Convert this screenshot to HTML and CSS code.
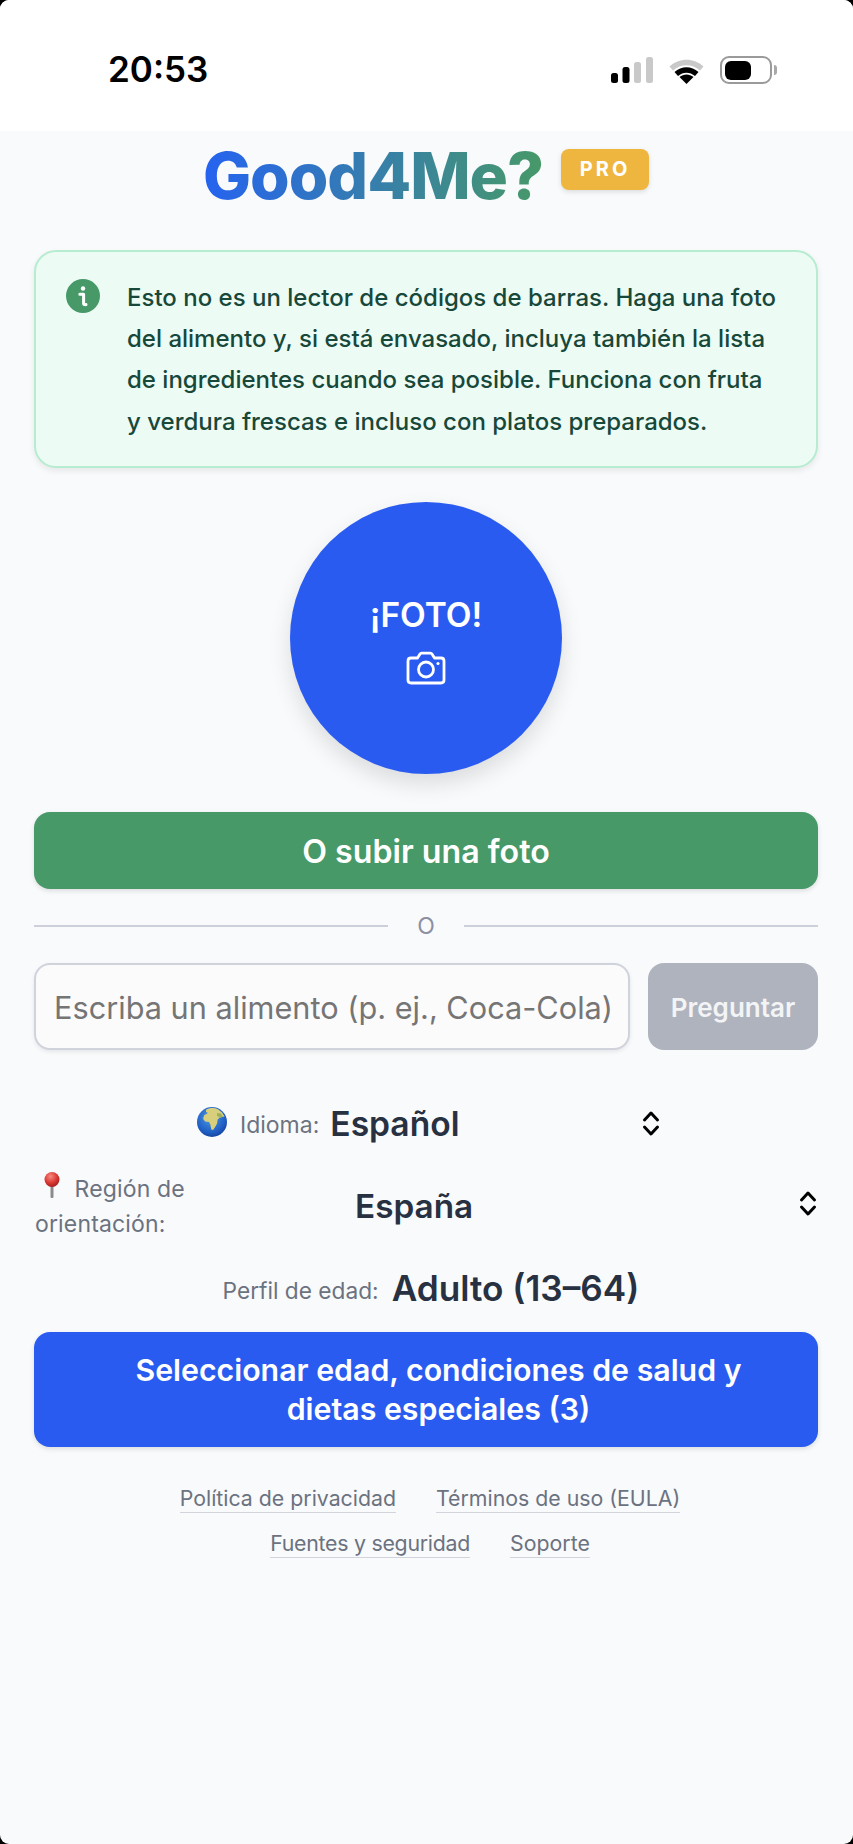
FILE: index.html
```html
<!DOCTYPE html>
<html lang="es">
<head>
<meta charset="utf-8">
<title>Good4Me?</title>
<link rel="stylesheet" href="styles.css">
</head>
<body>
<div class="app">
  <header class="status">
    <span class="time">20:53</span>
    <div class="status-icons">
      <svg class="signal" width="42" height="26" viewBox="0 0 42 26" aria-hidden="true">
        <rect x="0" y="16" width="7" height="10" rx="2.5" fill="#000"/>
        <rect x="11.5" y="10" width="7" height="16" rx="2.5" fill="#000"/>
        <rect x="23" y="5" width="7" height="21" rx="2.5" fill="#c9c9c9"/>
        <rect x="35" y="0" width="7" height="26" rx="2.5" fill="#c9c9c9"/>
      </svg>
      <svg class="wifi" width="35" height="27" viewBox="0 0 35 27" aria-hidden="true">
        <path d="M0.5 9.5C10 0.5 25 0.5 34.5 9.5L31 13.5C23 6.5 12 6.5 4 13.5Z" fill="#c9c9c9"/>
        <path d="M5.5 15C12.5 8.5 22.5 8.5 29.5 15L26 19C21 14.5 14 14.5 9 19Z" fill="#000"/>
        <path d="M10.5 20C14.5 16.5 20.5 16.5 24.5 20L17.5 27Z" fill="#000"/>
      </svg>
      <div class="battery"><div class="battery-fill"></div></div>
      <div class="battery-tip"></div>
    </div>
  </header>

  <main class="content">
    <div class="brand">
      <h1 class="logo">Good4Me?</h1>
      <span class="pro">PRO</span>
    </div>

    <section class="notice">
      <svg class="notice-icon" width="34" height="34" viewBox="0 0 34 34" aria-hidden="true">
        <circle cx="17" cy="17" r="17" fill="#479968"/>
        <circle cx="17" cy="9.5" r="2.2" fill="#fff"/>
        <path d="M13.8 15.2h3.8v9.2c0 1 .6 1.4 2.4 1.2" fill="none" stroke="#fff" stroke-width="3" stroke-linecap="round" stroke-linejoin="round"/>
      </svg>
      <p class="notice-text">Esto no es un lector de códigos de barras. Haga una foto del alimento y, si está envasado, incluya también la lista de ingredientes cuando sea posible. Funciona con fruta y&nbsp;verdura frescas e incluso con platos preparados.</p>
    </section>

    <button class="shoot" type="button">
      <span class="shoot-label">¡FOTO!</span>
      <svg width="40" height="34" viewBox="0 0 40 34" aria-hidden="true">
        <path d="M5 7h6.5l2.2-3.6c.5-.8 1.1-1.2 2-1.2h8.600c.9 0 1.500.4 2 1.200L28.500 7H35c1.700 0 3 1.300 3 3v19c0 1.700-1.300 3-3 3H5c-1.700 0-3-1.300-3-3V10c0-1.700 1.300-3 3-3Z" fill="none" stroke="#fff" stroke-width="2.800" stroke-linejoin="round"/>
        <circle cx="20" cy="18.500" r="7.500" fill="none" stroke="#fff" stroke-width="2.800"/>
        <circle cx="32" cy="12.500" r="1.600" fill="#fff"/>
      </svg>
    </button>

    <button class="upload" type="button">O subir una foto</button>

    <div class="divider"><span class="divider-label">O</span></div>

    <form class="ask">
      <input class="ask-input" type="text" placeholder="Escriba un alimento (p. ej., Coca-Cola)">
      <button class="ask-button" type="button">Preguntar</button>
    </form>

    <div class="field field-lang">
      <svg class="globe" width="30" height="30" viewBox="0 0 30 30" aria-hidden="true">
        <defs>
          <radialGradient id="sea" cx="45%" cy="35%" r="70%">
            <stop offset="0" stop-color="#4d9be8"/>
            <stop offset="0.7" stop-color="#1f5fc4"/>
            <stop offset="1" stop-color="#123f96"/>
          </radialGradient>
        </defs>
        <circle cx="15" cy="15" r="15" fill="url(#sea)"/>
        <path d="M9 2.800c3-1.800 8-2.400 12-.6l4 3.300 2.500 4-4.500 1-2.400 2-.5 4-2 3.600-2 2.800-1.800-.4-1-5-1.200-2.500-4-.6-2-2.600 1-3.500L11 6 9 5Z" fill="#d8cf7c"/>
        <path d="M20 6l4 .5 2 3.500-4 .5-2-2Z" fill="#9cb35a"/>
      </svg>
      <span class="field-label">Idioma:</span>
      <span class="field-value">Español</span>
      <svg class="updown" width="18" height="27" viewBox="0 0 18 27" aria-hidden="true">
        <path d="M2.500 10L9 3l6.500 7M2.500 17L9 24l6.500-7" fill="none" stroke="#000" stroke-width="3" stroke-linecap="round" stroke-linejoin="round"/>
      </svg>
    </div>

    <div class="field field-region">
      <span class="field-label region-label"><svg class="pin" width="16" height="26" viewBox="0 0 16 26" aria-hidden="true">
          <defs>
            <radialGradient id="ball" cx="40%" cy="30%" r="70%">
              <stop offset="0" stop-color="#f58a80"/>
              <stop offset="0.6" stop-color="#dc3b35"/>
              <stop offset="1" stop-color="#a81f1f"/>
            </radialGradient>
          </defs>
          <rect x="6.500" y="12" width="3" height="14" rx="1" fill="#8b8b8b"/>
          <circle cx="8" cy="7.500" r="7.500" fill="url(#ball)"/>
        </svg> Región de orientación:</span>
      <span class="field-value region-value">España</span>
      <svg class="updown" width="18" height="27" viewBox="0 0 18 27" aria-hidden="true">
        <path d="M2.500 10L9 3l6.500 7M2.500 17L9 24l6.500-7" fill="none" stroke="#000" stroke-width="3" stroke-linecap="round" stroke-linejoin="round"/>
      </svg>
    </div>

    <div class="field field-age">
      <span class="field-label">Perfil de edad:</span>
      <span class="field-value">Adulto (13–64)</span>
    </div>

    <button class="select-profile" type="button">Seleccionar edad, condiciones de salud y<br>dietas especiales (3)</button>

    <nav class="links">
      <a class="link" href="#">Política de privacidad</a>
      <a class="link" href="#">Términos de uso (EULA)</a>
      <a class="link link-tight" href="#">Fuentes y seguridad</a>
      <a class="link" href="#">Soporte</a>
    </nav>
  </main>
</div>
</body>
</html>
```

FILE: styles.css
```css
* { box-sizing: border-box; }
html, body { margin: 0; padding: 0; height: 100%; background: #000; }
body { font-family: Inter, "Liberation Sans", sans-serif; }

.app {
  height: 1844px;
  background: #f9fafb;
  border-radius: 9px;
  overflow: hidden;
  display: flex;
  flex-direction: column;
}

.status {
  height: 131px;
  flex: none;
  background: #fff;
  display: flex;
  align-items: flex-start;
  justify-content: space-between;
  padding: 48px 76px 0 108px;
}
.time {
  font-family: Inter, sans-serif;
  font-size: 35px;
  line-height: 42px;
  font-weight: 600;
  color: #000;
}
.status-icons { display: flex; align-items: center; padding-top: 8px; }
.signal { margin-right: 16px; }
.wifi { margin-right: 16px; }
.battery {
  width: 52px;
  height: 28px;
  border: 2.5px solid #9a9a9a;
  border-radius: 9px;
  padding: 2.5px;
  background: #fff;
}
.battery-fill { width: 26px; height: 100%; background: #000; border-radius: 6px; }
.battery-tip { width: 3px; height: 10px; margin-left: 2px; background: #a8a8a8; border-radius: 0 3px 3px 0; }

.content { padding: 0 35px 0 34px; display: flex; flex-direction: column; }

.brand { display: flex; justify-content: center; align-items: flex-start; gap: 18px; height: 119px; }
.logo {
  margin: 7px 0 0;
  font-size: 64px;
  line-height: 76px;
  font-weight: 800;
  letter-spacing: -1px;
  background: linear-gradient(90deg, #2563f0, #479968);
  -webkit-background-clip: text;
  background-clip: text;
  color: transparent;
}
.pro {
  margin-top: 18px;
  width: 88px;
  height: 41px;
  border-radius: 8px;
  background: #efb63f;
  box-shadow: 0 2px 5px rgba(0, 0, 0, .12);
  color: #fff;
  font-size: 20px;
  line-height: 41px;
  font-weight: 700;
  letter-spacing: 3px;
  text-align: center;
}

.notice {
  height: 218px;
  border: 2px solid #b6ecd0;
  border-radius: 22px;
  background: #ecfbf4;
  box-shadow: 0 3px 6px rgba(0, 0, 0, .08);
  padding: 27px 26px 0 30px;
  display: flex;
  gap: 27px;
  align-items: flex-start;
}
.notice-icon { flex: none; }
.notice-text {
  margin: -2px 0 0;
  font-size: 24px;
  line-height: 41.200px;
  font-weight: 450;
  color: #17483a;
}

.shoot {
  align-self: center;
  margin-top: 34px;
  width: 272px;
  height: 272px;
  border: 0;
  border-radius: 50%;
  background: #2a5bf0;
  box-shadow: 0 10px 22px rgba(0, 0, 0, .12);
  color: #fff;
  display: flex;
  flex-direction: column;
  align-items: center;
  justify-content: center;
  gap: 16px;
  padding: 4px 0 0;
  font-family: inherit;
}
.shoot-label { font-size: 33.500px; line-height: 40px; font-weight: 600; }

.upload {
  margin-top: 38px;
  height: 77px;
  border: 0;
  border-radius: 16px;
  background: #479968;
  box-shadow: 0 2px 5px rgba(0, 0, 0, .12);
  color: #fff;
  font-family: inherit;
  font-size: 32.200px;
  font-weight: 600;
  padding: 2px 0 0;
}

.divider {
  margin-top: 24px;
  height: 26px;
  display: flex;
  align-items: center;
  gap: 29px;
  color: #8b90a3;
}
.divider::before, .divider::after { content: ""; flex: 1; height: 2px; background: #cdd0da; }
.divider-label { font-size: 23px; line-height: 26px; }

.ask { margin-top: 24px; display: flex; gap: 18px; align-items: stretch; height: 87px; }
.ask-input {
  flex: 1;
  min-width: 0;
  border: 2px solid #d0d2dc;
  border-radius: 16px;
  background: #fbfbfc;
  box-shadow: 0 2px 4px rgba(0, 0, 0, .08);
  padding: 2px 0 0 18px;
  font-family: inherit;
  font-size: 30.700px;
}
.ask-input::placeholder { color: #757575; opacity: 1; }
.ask-button {
  flex: none;
  width: 170px;
  border: 0;
  border-radius: 16px;
  background: #afb3bd;
  color: #f3f4f6;
  font-family: inherit;
  font-size: 26px;
  font-weight: 600;
  padding: 2px 0 0;
}

.field { display: flex; align-items: center; }
.field-label { font-size: 23px; color: #6b7280; }
.field-value { font-size: 33.600px; font-weight: 600; color: #283142; }
.field-lang .field-label, .field-age .field-label { padding-top: 4px; }

.field-lang { margin-top: 53px; height: 40px; padding-left: 163px; }
.globe { flex: none; margin-right: 13px; margin-top: -2px; }
.field-lang .field-value { margin-left: 11px; width: 312px; }

.field-region { margin-top: 21px; height: 84px; padding-left: 1px; }
.region-label { width: 186px; flex: none; line-height: 35px; letter-spacing: .15px; padding-top: 2px; }
.pin { vertical-align: -1px; margin: 0 8px 0 9px; }
.region-value { margin-left: 134px; flex: 1; font-size: 33.300px; }
.field-region .updown { margin: -5px 1px 0 0; }

.field-age { margin-top: 20px; height: 40px; justify-content: center; gap: 13px; padding-left: 10px; }
.field-age .field-label { font-size: 22.700px; }
.field-age .field-value { font-size: 35.200px; }

.select-profile {
  margin-top: 24px;
  height: 115px;
  border: 0;
  border-radius: 16px;
  background: #2a5bf0;
  box-shadow: 0 2px 5px rgba(0, 0, 0, .12);
  color: #fff;
  font-family: inherit;
  font-size: 30.300px;
  line-height: 39px;
  font-weight: 600;
  padding: 0 0 0 25px;
}

.links {
  margin-top: 38px;
  display: flex;
  flex-wrap: wrap;
  justify-content: center;
  gap: 17px 40px;
  padding: 0 136px 0 144px;
}
.link {
  font-size: 21.300px;
  line-height: 27px;
  color: #6b7280;
  text-decoration: none;
  border-bottom: 1px solid #d1d5db;
}
.link-tight { letter-spacing: -.25px; }
```
